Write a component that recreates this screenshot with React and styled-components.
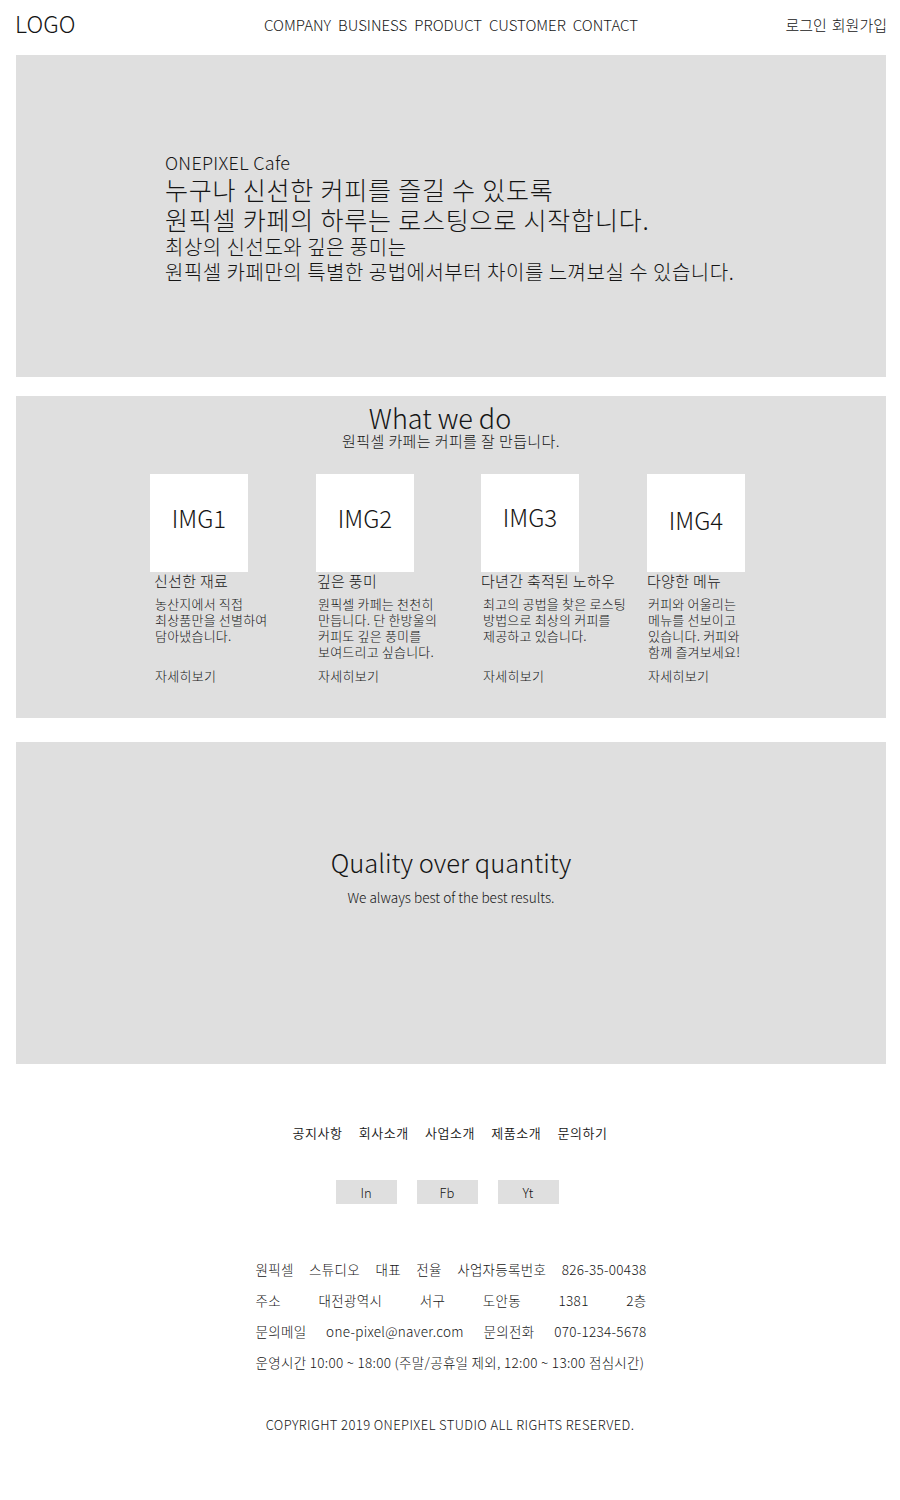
import React from "react";
import styled, { createGlobalStyle } from "styled-components";

const GlobalStyle = createGlobalStyle`
  html, body { margin: 0; padding: 0; background: #fff; }
  body {
    font-family: "Noto Sans CJK KR", "Noto Sans", sans-serif;
    font-weight: 300;
    color: #151515;
  }
  * { box-sizing: border-box; }
  p, h1, h2, h3, ul { margin: 0; padding: 0; }
`;

const Page = styled.div`
  width: 900px;
  display: flex;
  flex-direction: column;
`;

const Header = styled.header`
  height: 55px;
  display: grid;
  grid-template-columns: 1fr auto 1fr;
  align-items: center;
  padding: 0 13px 0 15px;
`;

const Logo = styled.div`
  font-size: 23px;
  line-height: 1;
  padding-bottom: 9px;
`;

const Nav = styled.nav`
  display: flex;
  gap: 7px;
  font-size: 15px;
  padding-bottom: 6px;
`;

const Auth = styled.div`
  justify-self: end;
  display: flex;
  gap: 5px;
  font-size: 15px;
  padding-bottom: 6px;
`;

const Main = styled.main`
  display: flex;
  flex-direction: column;
  padding: 0 14px 0 16px;
`;

const GrayBlock = styled.section`
  background: #dfdfdf;
  height: 322px;
  margin-bottom: ${(p) => p.$gap || 0}px;
`;

const Hero = styled(GrayBlock)`
  display: flex;
  align-items: center;
  padding-left: 149px;
  padding-top: 1px;
`;

const HeroText = styled.div`
  display: flex;
  flex-direction: column;
`;

const Eyebrow = styled.p`
  font-size: 18px;
  line-height: 24px;
  letter-spacing: 0.3px;
`;

const Lead = styled.p`
  font-size: 25px;
  line-height: 30px;
  letter-spacing: 0.8px;
`;

const Sub = styled.p`
  font-size: 20px;
  line-height: 25px;
  letter-spacing: 0.5px;
`;

const WhatWeDo = styled(GrayBlock)`
  display: flex;
  flex-direction: column;
  align-items: center;
  padding-top: 7px;
`;

const SectionTitle = styled.h2`
  font-weight: 300;
  font-size: ${(p) => p.$size || 27}px;
  line-height: ${(p) => p.$lh || 30}px;
  text-align: center;
  margin-right: ${(p) => p.$offset || 0}px;
`;

const SectionSub = styled.p`
  font-size: ${(p) => p.$size || 15}px;
  line-height: ${(p) => p.$lh || 16}px;
  letter-spacing: ${(p) => p.$ls || 0}px;
  text-align: center;
  margin-top: ${(p) => p.$mt || 0}px;
`;

const Cards = styled.div`
  align-self: stretch;
  display: grid;
  grid-template-columns: 166px 165px 166px 166px;
  padding-left: 134px;
  margin-top: 25px;
`;

const Card = styled.div`
  display: flex;
  flex-direction: column;
`;

const Thumb = styled.div`
  width: 98px;
  height: 98px;
  background: #fff;
  display: flex;
  align-items: center;
  justify-content: center;
  font-size: 24px;
  padding-bottom: ${(p) => p.$lift || 0}px;
`;

const CardTitle = styled.h3`
  font-weight: 300;
  font-size: 15px;
  line-height: 18px;
  letter-spacing: 0.3px;
  margin-left: ${(p) => p.$indent || 0}px;
`;

const CardDesc = styled.p`
  font-size: 13px;
  line-height: 16px;
  min-height: 64px;
  margin-top: 6px;
  letter-spacing: 0.2px;
  margin-left: ${(p) => p.$indent || 0}px;
  white-space: pre-line;
`;

const More = styled.a`
  font-size: 13px;
  line-height: 16px;
  margin-top: 8px;
  margin-left: ${(p) => p.$indent || 0}px;
  letter-spacing: 0.3px;
  color: inherit;
  text-decoration: none;
`;

const Quality = styled(GrayBlock)`
  display: flex;
  flex-direction: column;
  align-items: center;
  padding-top: 104px;
`;

const Footer = styled.footer`
  display: flex;
  flex-direction: column;
  align-items: center;
  padding-top: 60px;
  padding-bottom: 60px;
`;

const FooterMenu = styled.ul`
  list-style: none;
  display: flex;
  gap: 16px;
  font-size: 13px;
  line-height: 18px;
  letter-spacing: 0.6px;
  font-weight: 350;
`;

const Socials = styled.div`
  display: flex;
  gap: 20px;
  margin-top: 38px;
  margin-right: 6px;
`;

const SocialBtn = styled.a`
  width: 61px;
  height: 24px;
  background: #dfdfdf;
  display: flex;
  align-items: center;
  justify-content: center;
  font-size: 13px;
  color: inherit;
  text-decoration: none;
`;

const Info = styled.div`
  width: 391px;
  margin-top: 50px;
  margin-left: 2px;
  display: flex;
  flex-direction: column;
  font-size: 13.5px;
  line-height: 31px;
  letter-spacing: 0.3px;
`;

const InfoRow = styled.div`
  display: flex;
  justify-content: space-between;
  white-space: nowrap;
`;

const Copyright = styled.p`
  margin-top: 31px;
  font-size: 13px;
  line-height: 31px;
  letter-spacing: 0.4px;
  text-align: center;
`;

const cards = [
  { img: "IMG1", lift: 12, title: "신선한 재료", tIndent: 4, dIndent: 5, desc: "농산지에서 직접\n최상품만을 선별하여\n담아냈습니다." },
  { img: "IMG2", lift: 12, title: "깊은 풍미", tIndent: 1, dIndent: 2, desc: "원픽셀 카페는 천천히\n만듭니다. 단 한방울의\n커피도 깊은 풍미를\n보여드리고 싶습니다." },
  { img: "IMG3", lift: 14, title: "다년간 축적된 노하우", tIndent: 0, dIndent: 2, desc: "최고의 공법을 찾은 로스팅\n방법으로 최상의 커피를\n제공하고 있습니다." },
  { img: "IMG4", lift: 8, title: "다양한 메뉴", tIndent: 0, dIndent: 1, desc: "커피와 어울리는\n메뉴를 선보이고\n있습니다. 커피와\n함께 즐겨보세요!" },
];

export default function App() {
  return (
    <Page>
      <GlobalStyle />
      <Header>
        <Logo>LOGO</Logo>
        <Nav>
          <span>COMPANY</span>
          <span>BUSINESS</span>
          <span>PRODUCT</span>
          <span>CUSTOMER</span>
          <span>CONTACT</span>
        </Nav>
        <Auth>
          <span>로그인</span>
          <span>회원가입</span>
        </Auth>
      </Header>
      <Main>
        <Hero $gap={19}>
          <HeroText>
            <Eyebrow>ONEPIXEL Cafe</Eyebrow>
            <Lead>누구나 신선한 커피를 즐길 수 있도록</Lead>
            <Lead>원픽셀 카페의 하루는 로스팅으로 시작합니다.</Lead>
            <Sub>최상의 신선도와 깊은 풍미는</Sub>
            <Sub>원픽셀 카페만의 특별한 공법에서부터 차이를 느껴보실 수 있습니다.</Sub>
          </HeroText>
        </Hero>
        <WhatWeDo $gap={24}>
          <SectionTitle $lh={30} $offset={22}>What we do</SectionTitle>
          <SectionSub $size={15} $lh={16} $ls={0.4}>원픽셀 카페는 커피를 잘 만듭니다.</SectionSub>
          <Cards>
            {cards.map((c) => (
              <Card key={c.img}>
                <Thumb $lift={c.lift}>{c.img}</Thumb>
                <CardTitle $indent={c.tIndent}>{c.title}</CardTitle>
                <CardDesc $indent={c.dIndent}>{c.desc}</CardDesc>
                <More href="#" $indent={c.dIndent}>자세히보기</More>
              </Card>
            ))}
          </Cards>
        </WhatWeDo>
        <Quality>
          <SectionTitle $size={25.5} $lh={32}>Quality over quantity</SectionTitle>
          <SectionSub $size={13.6} $lh={18} $mt={10}>We always best of the best results.</SectionSub>
        </Quality>
      </Main>
      <Footer>
        <FooterMenu>
          <li>공지사항</li>
          <li>회사소개</li>
          <li>사업소개</li>
          <li>제품소개</li>
          <li>문의하기</li>
        </FooterMenu>
        <Socials>
          <SocialBtn href="#">In</SocialBtn>
          <SocialBtn href="#">Fb</SocialBtn>
          <SocialBtn href="#">Yt</SocialBtn>
        </Socials>
        <Info>
          <InfoRow>
            <span>원픽셀</span><span>스튜디오</span><span>대표</span><span>전율</span><span>사업자등록번호</span><span>826-35-00438</span>
          </InfoRow>
          <InfoRow>
            <span>주소</span><span>대전광역시</span><span>서구</span><span>도안동</span><span>1381</span><span>2층</span>
          </InfoRow>
          <InfoRow>
            <span>문의메일</span><span>one-pixel@naver.com</span><span>문의전화</span><span>070-1234-5678</span>
          </InfoRow>
          <InfoRow>
            <span>운영시간 10:00 ~ 18:00 (주말/공휴일 제외, 12:00 ~ 13:00 점심시간)</span>
          </InfoRow>
        </Info>
        <Copyright>COPYRIGHT 2019 ONEPIXEL STUDIO ALL RIGHTS RESERVED.</Copyright>
      </Footer>
    </Page>
  );
}
